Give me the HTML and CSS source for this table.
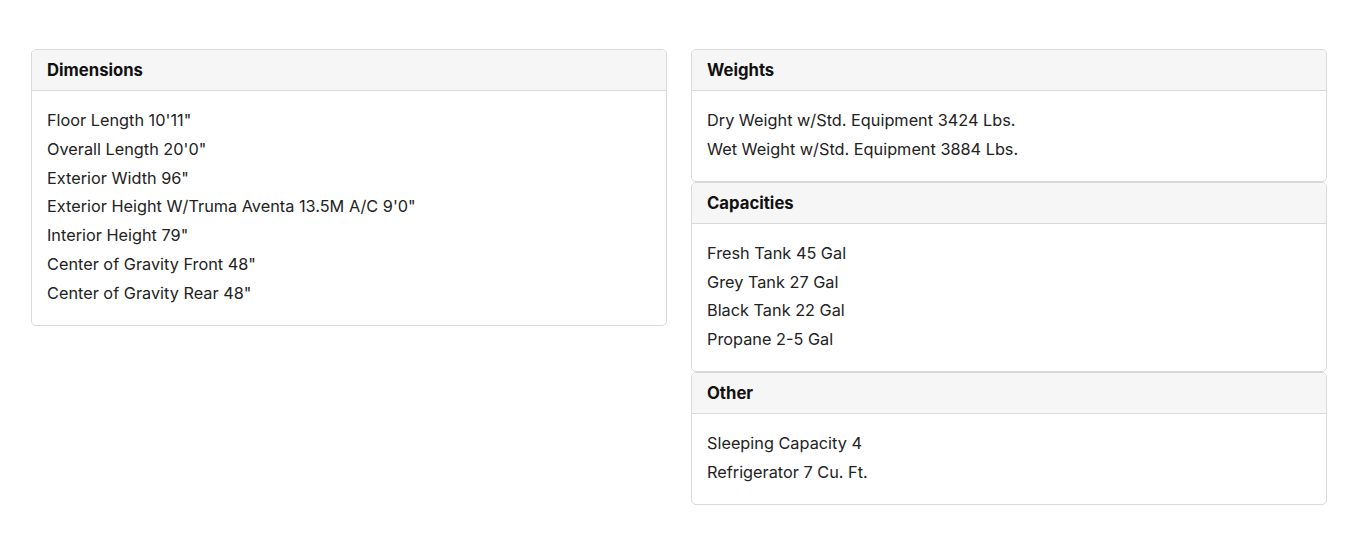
FILE: index.html
```html
<!DOCTYPE html>
<html lang="en">
<head>
<meta charset="utf-8">
<title>Specifications</title>
<link rel="stylesheet" href="styles.css">
</head>
<body>
<div class="specs">
  <div class="col">
    <div class="card">
      <div class="card-head">Dimensions</div>
      <div class="card-body">
        <div class="row">Floor Length 10'11"</div>
        <div class="row">Overall Length 20'0"</div>
        <div class="row">Exterior Width 96"</div>
        <div class="row">Exterior Height W/Truma Aventa 13.5M A/C 9'0"</div>
        <div class="row">Interior Height 79"</div>
        <div class="row">Center of Gravity Front 48"</div>
        <div class="row">Center of Gravity Rear 48"</div>
      </div>
    </div>
  </div>
  <div class="col">
    <div class="card">
      <div class="card-head">Weights</div>
      <div class="card-body">
        <div class="row">Dry Weight w/Std. Equipment 3424 Lbs.</div>
        <div class="row">Wet Weight w/Std. Equipment 3884 Lbs.</div>
      </div>
    </div>
    <div class="card">
      <div class="card-head">Capacities</div>
      <div class="card-body">
        <div class="row">Fresh Tank 45 Gal</div>
        <div class="row">Grey Tank 27 Gal</div>
        <div class="row">Black Tank 22 Gal</div>
        <div class="row">Propane 2-5 Gal</div>
      </div>
    </div>
    <div class="card">
      <div class="card-head">Other</div>
      <div class="card-body">
        <div class="row">Sleeping Capacity 4</div>
        <div class="row">Refrigerator 7 Cu. Ft.</div>
      </div>
    </div>
  </div>
</div>
</body>
</html>
```

FILE: styles.css
```css
html, body {
  margin: 0;
  padding: 0;
  background: #ffffff;
}
body {
  font-family: "Inter", "Open Sans", sans-serif;
  color: #222222;
}
.specs {
  display: grid;
  grid-template-columns: 636px 636px;
  column-gap: 24px;
  padding: 49px 0 0 31px;
  align-items: start;
}
.col {
  display: flex;
  flex-direction: column;
}
.card {
  border: 1px solid #d9d9d9;
  border-radius: 5px;
  overflow: hidden;
  background: #fff;
}
.card-head {
  height: 41px;
  box-sizing: border-box;
  padding: 0 15px;
  display: flex;
  align-items: center;
  background: #f6f6f6;
  border-bottom: 1px solid #d9d9d9;
  font-weight: 700;
  font-size: 16.7px;
  color: #111111;
}
.card-body {
  padding: 15px 15px 17.2px;
}
.row {
  font-size: 16.3px;
  line-height: 28.8px;
  color: #222222;
}
```
